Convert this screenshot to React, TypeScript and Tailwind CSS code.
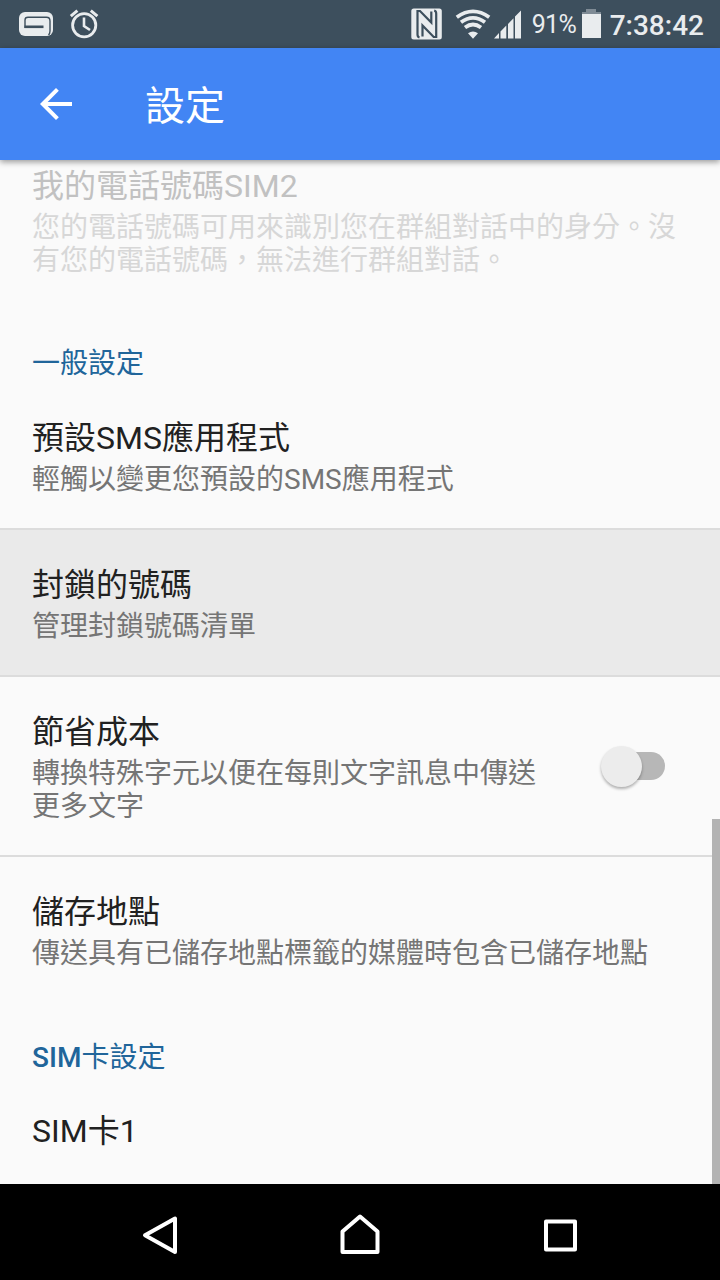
import type { ReactNode } from 'react';

type RowProps = {
  title: string;
  children?: ReactNode;
  className?: string;
  titleClass?: string;
  summaryClass?: string;
  trailing?: ReactNode;
};

function Row({
  title,
  children,
  className = '',
  titleClass = 'text-[#212121]',
  summaryClass = 'text-[#757575]',
  trailing,
}: RowProps) {
  return (
    <div className={`flex shrink-0 px-8 ${className}`}>
      <div className="flex-1 whitespace-nowrap">
        <div className={`text-[32px] leading-[46px] ${titleClass}`}>{title}</div>
        {children && <div className={`mt-0.5 text-[28px] leading-[33px] ${summaryClass}`}>{children}</div>}
      </div>
      {trailing}
    </div>
  );
}

function SectionHeader({ children, className = '' }: { children: ReactNode; className?: string }) {
  return <div className={`shrink-0 px-8 text-[28px] leading-[38px] text-[#20659a] ${className}`}>{children}</div>;
}

function StatusBar() {
  return (
    <header className="flex h-12 shrink-0 items-center bg-[#3d4f5d] text-[#e9ecee]">
      <svg className="ml-[18px]" width="36" height="48" viewBox="0 0 36 48" fill="none">
        <rect x="1" y="12" width="34" height="24" rx="6" fill="#e9ecee" />
        <path d="M30.5 35Q32 33.5 32 31V21Q32 17.3 28.5 17.3H10Q7 17.3 7 20V28" stroke="#3d4f5d" strokeWidth="1.4" />
        <path d="M6.5 26.8H25.5" stroke="#3d4f5d" strokeWidth="2.6" />
      </svg>
      <svg className="ml-[14px]" width="32" height="48" viewBox="0 0 32 48" fill="none" stroke="#e9ecee">
        <circle cx="16.2" cy="25.2" r="11.6" strokeWidth="2.8" />
        <path d="M16 17.5V26L22 30" strokeWidth="2.6" />
        <path d="M2.8 16.2L9.4 10.6M29.4 16.2L22.8 10.6" strokeWidth="3" />
      </svg>
      <div className="flex-1" />
      <svg width="32" height="48" viewBox="0 0 32 48">
        <rect x="1.3" y="8.5" width="30.5" height="31" rx="2.5" fill="#e9ecee" />
        <path d="M9.5 37.5Q7.5 37 7.5 34.5V11H10L21.3 22.5V11.5" fill="none" stroke="#3d4f5d" strokeWidth="2.2" />
        <path d="M24.2 10.5Q26.2 11 26.2 13.5V37H23.7L12.5 25.5V36.5" fill="none" stroke="#3d4f5d" strokeWidth="2.2" />
      </svg>
      <svg className="ml-[13px]" width="36" height="48" viewBox="0 0 36 48" fill="none" stroke="#e9ecee">
        <path d="M1.8 17.3Q18 5.5 34.2 17.3" strokeWidth="3.8" />
        <path d="M6 22.3Q18 13.5 30 22.3" strokeWidth="3.8" />
        <path d="M10 27.5Q18 21.5 26 27.5" strokeWidth="3.8" />
        <path d="M13 33.2Q18 29.8 23 33.2L18 38.8Z" fill="#e9ecee" stroke="none" />
      </svg>
      <svg className="ml-[3px]" width="28" height="48" viewBox="0 0 28 48" fill="#e9ecee">
        <path d="M0 38.5L5 33V38.5ZM6.5 31.5L12.3 25.5V38.5H6.5ZM14 24L19.5 18.3V38.5H14ZM21 16.5L27 10.5V38.5H21Z" />
      </svg>
      <span className="ml-[10px] w-11 whitespace-nowrap pt-[2px] text-[25px] leading-[46px] tracking-[-0.6px]">91%</span>
      <svg className="ml-[5px]" width="20" height="48" viewBox="0 0 20 48">
        <path d="M5 9H15V12H20V14H1V12H5Z" fill="#7f8b95" />
        <path d="M1 14H20V38H1Z" fill="#e9ecee" />
      </svg>
      <span className="ml-[9px] mr-4 whitespace-nowrap pt-[3px] text-[28px] font-medium leading-[45px]">7:38:42</span>
    </header>
  );
}

function Switch() {
  return (
    <div className="mt-9 mr-[21px] flex h-[42px] w-[66px] items-center">
      <div className="relative z-10 h-[41px] w-[41px] shrink-0 rounded-full bg-[#ececec] shadow-[0_2px_3px_rgba(0,0,0,0.3)]" />
      <div className="-ml-[25px] h-7 w-12 rounded-full bg-[#b7b7b7]" />
    </div>
  );
}

export default function App() {
  return (
    <div className="flex h-[1280px] w-[720px] flex-col overflow-hidden bg-[#fafafa] font-['Roboto','Noto_Sans_CJK_TC',sans-serif]" lang="zh-TW">
      <StatusBar />
      <div className="relative z-10 flex h-28 shrink-0 items-center bg-[#4285f4] shadow-[0_2px_6px_rgba(0,0,0,0.4)]">
        <svg className="ml-8" width="48" height="48" viewBox="0 0 24 24" fill="#fff">
          <path d="M20 11H7.83l5.59-5.59L12 4l-8 8 8 8 1.41-1.41L7.83 13H20v-2z" />
        </svg>
        <h1 className="ml-[65px] pt-[5px] text-[40px] leading-[56px] text-white">設定</h1>
      </div>

      <main className="relative flex min-h-0 flex-1 flex-col overflow-hidden">
        <Row title="我的電話號碼SIM2" className="h-[149px] pt-[3px]" titleClass="text-[#c1c1c1]" summaryClass="text-[#d7d7d7]">
          您的電話號碼可用來識別您在群組對話中的身分。沒
          <br />
          有您的電話號碼，無法進行群組對話。
        </Row>
        <SectionHeader className="h-[73px] pt-9">一般設定</SectionHeader>
        <Row title="預設SMS應用程式" className="h-[148px] border-b-2 border-[#dcdcdc] pt-[33px]">
          輕觸以變更您預設的SMS應用程式
        </Row>
        <Row title="封鎖的號碼" className="h-[147px] border-b-2 border-[#dcdcdc] bg-[#eaeaea] pt-8">
          管理封鎖號碼清單
        </Row>
        <Row title="節省成本" className="h-[180px] border-b-2 border-[#dcdcdc] pt-8" trailing={<Switch />}>
          轉換特殊字元以便在每則文字訊息中傳送
          <br />
          更多文字
        </Row>
        <Row title="儲存地點" className="h-[147px] pt-8">
          傳送具有已儲存地點標籤的媒體時包含已儲存地點
        </Row>
        <SectionHeader className="h-[73px] pt-[35px]">
          <span className="font-medium">SIM</span>卡設定
        </SectionHeader>
        <Row title="SIM卡1" className="pt-[31px]" />
        <div className="absolute right-0 bottom-0 h-[365px] w-2 bg-[#b3b3b3]" />
      </main>

      <nav className="flex h-24 shrink-0 items-center justify-between bg-black px-[136px]">
        <svg width="48" height="96" viewBox="0 0 48 96" fill="none" stroke="#fff" strokeWidth="4" strokeLinejoin="round">
          <path d="M9 51.3L39 34.5V68Z" />
        </svg>
        <svg width="48" height="96" viewBox="0 0 48 96" fill="none" stroke="#fff" strokeWidth="4" strokeLinejoin="round">
          <path d="M24 32.5L41.5 47.5V68H6.5V47.5Z" />
        </svg>
        <svg width="48" height="96" viewBox="0 0 48 96" fill="none" stroke="#fff" strokeWidth="4" strokeLinejoin="round">
          <path d="M10 37.5H39V65.5H10Z" />
        </svg>
      </nav>
    </div>
  );
}
